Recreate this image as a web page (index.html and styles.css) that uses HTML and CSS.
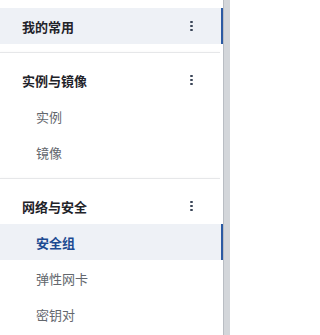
FILE: index.html
```html
<!DOCTYPE html>
<html lang="zh">
<head>
<meta charset="utf-8">
<link rel="stylesheet" href="styles.css">
</head>
<body>
<div class="frame">
  <nav class="nav">
    <div class="row head active">
      <span class="label">我的常用</span>
      <span class="more"><i></i><i></i><i></i></span>
    </div>
    <div class="sep"></div>
    <div class="row head">
      <span class="label">实例与镜像</span>
      <span class="more"><i></i><i></i><i></i></span>
    </div>
    <div class="row item"><span class="label">实例</span></div>
    <div class="row item"><span class="label">镜像</span></div>
    <div class="sep"></div>
    <div class="row head">
      <span class="label">网络与安全</span>
      <span class="more"><i></i><i></i><i></i></span>
    </div>
    <div class="row item active"><span class="label">安全组</span></div>
    <div class="row item"><span class="label">弹性网卡</span></div>
    <div class="row item"><span class="label">密钥对</span></div>
  </nav>
  <div class="track"></div>
</div>
</body>
</html>
```

FILE: styles.css
```css
html, body {
  margin: 0;
  padding: 0;
  background: #ffffff;
}
body {
  font-family: "Noto Sans CJK SC", "Noto Sans", sans-serif;
  width: 230px;
  height: 335px;
  overflow: hidden;
}
.frame {
  display: flex;
  height: 335px;
}
.nav {
  width: 223px;
  padding-top: 8px;
  display: flex;
  flex-direction: column;
  background: #ffffff;
}
.track {
  width: 7px;
  background: #d3d6da;
  border-left: 1px solid #b9bdc3;
  box-sizing: border-box;
}
.row {
  height: 36px;
  flex: none;
  display: flex;
  align-items: center;
  box-sizing: border-box;
  font-size: 13px;
}
.head {
  padding-left: 22px;
  padding-right: 30px;
  justify-content: space-between;
  font-weight: 700;
  color: #1f2329;
}
.item {
  padding-left: 36px;
  color: #63676d;
}
.row.active {
  background: #eef1f6;
  border-right: 2px solid #2b5aa3;
}
.item.active {
  color: #1d4a91;
  font-weight: 700;
}
.head.active {
  padding-right: 28px;
}
.more {
  display: flex;
  flex-direction: column;
  gap: 1.6px;
  align-items: center;
  width: 3px;
}
.more i {
  display: block;
  width: 2.6px;
  height: 2.6px;
  border-radius: 50%;
  background: #3a4557;
}
.sep {
  flex: none;
  height: 1px;
  margin: 8px 3px 9px 0;
  background: #e6e7e9;
  box-shadow: 0 -1px 2px rgba(0,0,0,0.03);
}
```
